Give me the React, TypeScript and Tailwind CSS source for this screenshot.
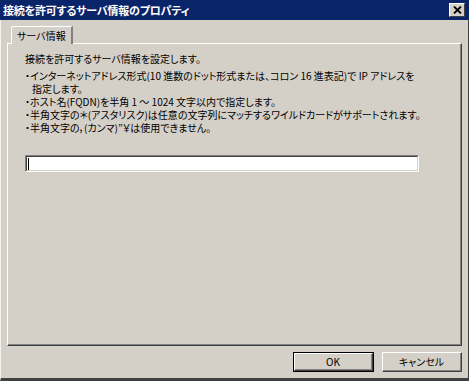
import React from "react";

const font = "font-['Noto_Sans_CJK_JP','Noto_Sans_CJK_SC',sans-serif] [font-feature-settings:'palt']";

export default function App() {
  return (
    <div className={`w-[469px] h-[381px] bg-[#d4d0c8] flex flex-col overflow-hidden text-black ${font}`}>
      {/* Title bar */}
      <div className="h-[20px] bg-[#0a246a] flex items-center justify-between pl-[3px] pr-[4px] shrink-0">
        <span className="text-white font-bold text-[11px] leading-none tracking-[-0.2px]">接続を許可するサーバ情報のプロパティ</span>
        <div className="w-[16px] h-[14px] bg-[#d4d0c8] border-t border-l border-t-white border-l-white border-b border-r border-b-[#404040] border-r-[#404040] flex items-center justify-center">
          <svg width="9" height="8" viewBox="0 0 9 8">
            <path d="M1 0.5 L8 7.5 M8 0.5 L1 7.5" stroke="#000" strokeWidth="1.8" />
          </svg>
        </div>
      </div>

      <div className="flex-1 flex flex-col border-l border-l-[#f4f3ef] border-r border-r-[#404040] border-b-[3px] border-b-[#404040]">
        {/* Tab area */}
        <div className="pl-[6px] pr-[6px] pt-[6px] flex flex-col">
          <div className="flex">
            <div className="ml-[4px] h-[18px] px-[5px] bg-[#d4d0c8] border-t border-l border-t-white border-l-white border-r-2 border-r-[#808080] relative z-10 -mb-[1px] flex items-start pt-[2px] rounded-tl-[2px]">
              <span className="text-[10px] leading-[13px]">サーバ情報</span>
            </div>
          </div>
          {/* Panel */}
          <div className="h-[303px] border-t border-l border-t-white border-l-white border-r border-b border-r-[#404040] border-b-[#404040]">
            <div className="h-full border-r border-b border-r-[#808080] border-b-[#808080] pl-[17px] pt-[8px] flex flex-col">
              <div className="text-[10px] leading-[13px]">接続を許可するサーバ情報を設定します。</div>
              <div className="mt-[4px] text-[10px] leading-[13px]">
                <div>・インターネットアドレス形式(10 進数のドット形式または、コロン 16 進表記)で IP アドレスを</div>
                <div className="pl-[7px]">指定します。</div>
                <div>・ホスト名(FQDN)を半角 1 ～ 1024 文字以内で指定します。</div>
                <div>・半角文字の＊(アスタリスク)は任意の文字列にマッチするワイルドカードがサポートされます。</div>
                <div>・半角文字の，(カンマ)”￥は使用できません。</div>
              </div>
              <div className="mt-[21px] w-[394px] h-[17px] border-t border-l border-t-[#808080] border-l-[#808080] border-b border-r border-b-white border-r-white">
                <div className="h-full border-t border-l border-t-[#404040] border-l-[#404040] border-b border-r border-b-[#d4d0c8] border-r-[#d4d0c8] bg-white flex items-center pl-[1px]">
                  <div className="w-[1px] h-[12px] bg-black" />
                </div>
              </div>
            </div>
          </div>
        </div>

        {/* Buttons */}
        <div className="flex justify-end gap-[8px] pr-[6px] pt-[6px]">
          <div className="w-[81px] h-[20px] border border-black">
            <div className="h-full border-t border-l border-t-white border-l-white border-b border-r border-b-[#404040] border-r-[#404040]">
              <div className="h-full border-b border-r border-b-[#808080] border-r-[#808080] flex items-center justify-center text-[10px] leading-none">
                OK
              </div>
            </div>
          </div>
          <div className="w-[80px] h-[20px] border-t border-l border-t-white border-l-white border-b border-r border-b-[#404040] border-r-[#404040]">
            <div className="h-full border-b border-r border-b-[#808080] border-r-[#808080] flex items-center justify-center text-[10px] leading-none">
              キャンセル
            </div>
          </div>
        </div>
      </div>
    </div>
  );
}
